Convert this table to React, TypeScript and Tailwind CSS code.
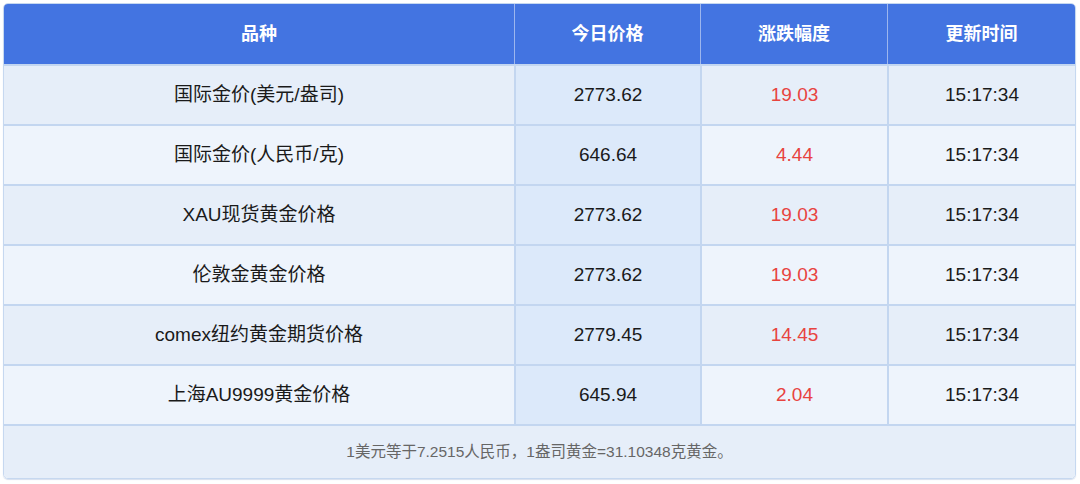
import React from "react";

const rows = [
  ["国际金价(美元/盎司)", "2773.62", "19.03", "15:17:34"],
  ["国际金价(人民币/克)", "646.64", "4.44", "15:17:34"],
  ["XAU现货黄金价格", "2773.62", "19.03", "15:17:34"],
  ["伦敦金黄金价格", "2773.62", "19.03", "15:17:34"],
  ["comex纽约黄金期货价格", "2779.45", "14.45", "15:17:34"],
  ["上海AU9999黄金价格", "645.94", "2.04", "15:17:34"],
];

export default function App() {
  return (
    <div
      className="w-[1080px] h-[484px] bg-white pt-[3px] pl-[3px]"
      style={{ fontFamily: '"Liberation Sans", "Noto Sans CJK SC", sans-serif' }}
    >
      <div className="w-[1073px] rounded-[5px] border border-[#c6d8f0] overflow-hidden shadow-[0_1px_1px_rgba(120,150,200,0.3)]">
        <div className="grid grid-cols-[510px_186px_187px_1fr] h-[60px] bg-[#4374e1] text-white font-bold text-[18px]">
          <div className="flex items-center justify-center">品种</div>
          <div className="flex items-center justify-center border-l border-[#9db6ee]">今日价格</div>
          <div className="flex items-center justify-center border-l border-[#9db6ee]">涨跌幅度</div>
          <div className="flex items-center justify-center border-l border-[#9db6ee]">更新时间</div>
        </div>
        {rows.map((r, i) => (
          <div
            key={i}
            className={`grid grid-cols-[510px_186px_187px_1fr] h-[60px] border-t-2 border-[#c3d6f0] text-[19px] text-[#1a1a1a] ${
              i % 2 === 0 ? "bg-[#e6eef9]" : "bg-[#eef4fc]"
            }`}
          >
            <div className="flex items-center justify-center">{r[0]}</div>
            <div className="flex items-center justify-center border-l-2 border-[#c3d6f0] bg-[#dce9fa]">{r[1]}</div>
            <div className="flex items-center justify-center border-l-2 border-[#c3d6f0] text-[#e8433f]">{r[2]}</div>
            <div className="flex items-center justify-center border-l-2 border-[#c3d6f0]">{r[3]}</div>
          </div>
        ))}
        <div className="h-[54px] border-t-2 border-[#c3d6f0] bg-[#e6eef9] flex items-center justify-center text-[15.5px] text-[#666]">
          1美元等于7.2515人民币，1盎司黄金=31.10348克黄金。
        </div>
      </div>
    </div>
  );
}
